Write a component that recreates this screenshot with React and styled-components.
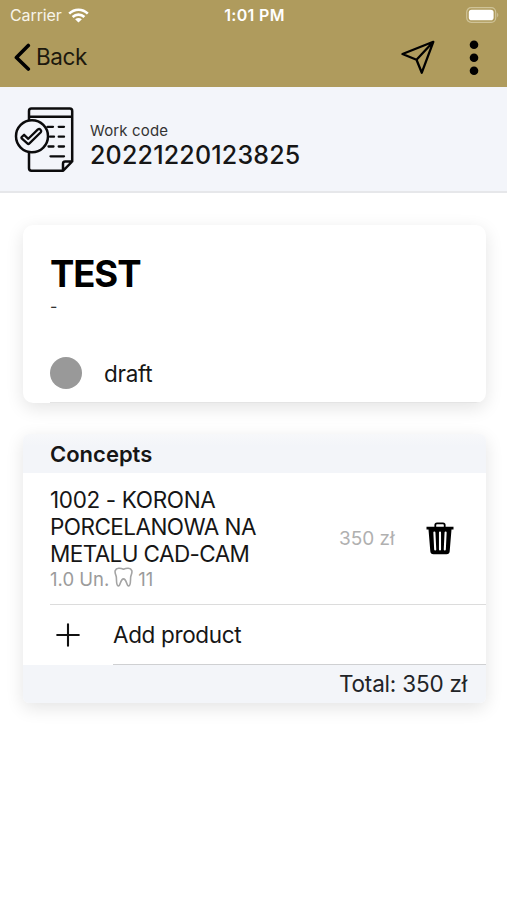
import React from "react";
import styled, { createGlobalStyle } from "styled-components";

const GlobalStyle = createGlobalStyle`
  * { box-sizing: border-box; }
  body {
    margin: 0;
    background: #fff;
    color: #161616;
    font-family: Inter, "Liberation Sans", sans-serif;
  }
  svg { display: block; flex: none; }
`;

const Screen = styled.div`
  width: 507px;
  height: 900px;
  overflow: hidden;
  background: #fff;
`;

const Header = styled.header`
  height: 87px;
  background: #af9b5d;
`;

const StatusBar = styled.div`
  display: grid;
  grid-template-columns: 1fr auto 1fr;
  align-items: center;
  height: 30px;
  padding: 0 8px 0 10px;
  color: #fff;
`;

const StatusGroup = styled.div`
  display: flex;
  align-items: center;
  justify-content: ${(p) => (p.$end ? "flex-end" : "flex-start")};
  gap: 6px;
`;

const Label = styled.span`
  display: block;
  white-space: nowrap;
  font-size: ${(p) => p.$size}px;
  line-height: ${(p) => p.$line || 27}px;
  font-weight: ${(p) => p.$weight || 400};
  letter-spacing: ${(p) => p.$track || 0}px;
  color: ${(p) => p.$color || "inherit"};
`;

const Toolbar = styled.nav`
  display: flex;
  align-items: center;
  justify-content: space-between;
  height: 54px;
  padding: 0 27px 0 13px;
`;

const BackButton = styled.button`
  display: flex;
  align-items: center;
  gap: 5px;
  padding: 0 0 1px;
  border: 0;
  background: none;
  color: #1d190e;
  font: inherit;
`;

const Actions = styled.div`
  display: flex;
  align-items: center;
  gap: 33px;
`;

const WorkBanner = styled.section`
  display: flex;
  height: 106px;
  padding: 19px 14px 0;
  gap: 14px;
  background: #f3f5fa;
  border-bottom: 2px solid #e6e7ea;
`;

const WorkText = styled.div`
  padding-top: 15px;
`;

const Card = styled.section`
  width: 463px;
  margin: ${(p) => p.$top}px 0 0 23px;
  border-radius: ${(p) => p.$radius}px;
  overflow: hidden;
  background: #fff;
  box-shadow: 0 5px 18px rgba(0, 0, 0, 0.11);
`;

const Summary = styled.div`
  height: 178px;
  padding: 28px 0 0 27px;
`;

const Status = styled.div`
  display: flex;
  align-items: center;
  gap: 22px;
  height: 32px;
  margin-top: 39px;
`;

const SummaryBody = styled.div`
  height: 150px;
  border-bottom: 1px solid #e4e4e4;
`;

const StatusDot = styled.span`
  width: 32px;
  height: 32px;
  border-radius: 50%;
  background: #999;
`;

const CardHeading = styled.div`
  display: flex;
  align-items: center;
  height: 39px;
  padding: 1px 27px 0;
  background: linear-gradient(#f7f8fa, #f3f5f9 12px);
`;

const ProductRow = styled.div`
  display: flex;
  height: 132px;
  margin-left: 27px;
  padding: 13px 31px 0 0;
  border-bottom: 1px solid #dcdcdc;
`;

const ProductInfo = styled.div`
  width: 289px;
`;

const Detail = styled.div`
  display: flex;
  align-items: flex-start;
  gap: 5px;
  height: 24px;
  color: #9b9b9b;
`;

const PriceArea = styled.div`
  display: flex;
  align-items: center;
  justify-content: space-between;
  width: 115px;
  height: 105px;
`;

const AddRow = styled.button`
  display: flex;
  align-items: center;
  width: 100%;
  height: 60px;
  padding: 0 0 0 33px;
  border: 0;
  background: #fff;
  color: #161616;
  font: inherit;
`;

const AddLabel = styled.div`
  display: flex;
  align-items: center;
  flex: 1;
  height: 60px;
  margin-left: 33px;
  border-bottom: 1px solid #cfd0d2;
`;

const TotalRow = styled.div`
  display: flex;
  align-items: center;
  justify-content: flex-end;
  height: 38px;
  padding: 0 19px 1px 0;
  background: #f3f5f9;
`;

const WifiIcon = () => (
  <svg width="21" height="15" viewBox="0 0 21 15" fill="none" stroke="#fff" strokeWidth="2.6">
    <path d="M1.2 5.6C6.4.4 14.6.4 19.8 5.6" />
    <path d="M4.6 9C8 5.8 13 5.8 16.4 9" />
    <path d="M10.5 14.6 7.1 11.3Q10.5 8.5 13.9 11.3Z" fill="#fff" stroke="none" />
  </svg>
);

const BatteryIcon = () => (
  <svg width="33" height="16" viewBox="0 0 33 16">
    <rect x=".7" y=".7" width="29" height="14.6" rx="4.5" fill="none" stroke="#cfc398" strokeWidth="1.2" />
    <rect x="2.8" y="2.8" width="24.8" height="10.4" rx="2.8" fill="#fff" />
    <path d="M31.2 5.6Q33.4 8 31.2 10.4Z" fill="#cfc398" />
  </svg>
);

const BackIcon = () => (
  <svg width="18" height="28" viewBox="0 0 18 28" fill="none" stroke="#000" strokeWidth="3.6" strokeLinecap="round" strokeLinejoin="round">
    <path d="M15.3 2.5 3.4 14.5l11.9 11.5" />
  </svg>
);

const SendIcon = () => (
  <svg width="34" height="34" viewBox="0 0 34 34" fill="none" stroke="#000" strokeWidth="2.3" strokeLinejoin="round">
    <path d="M32.3 1.8 1.5 14l14 5.7 5.3 13ZM32.3 1.8 15.5 19.7" />
  </svg>
);

const MoreIcon = () => (
  <svg width="12" height="36" viewBox="0 0 12 36">
    <circle cx="6" cy="5.8" r="4.3" />
    <circle cx="6" cy="18.8" r="4.3" />
    <circle cx="6" cy="31.7" r="4.3" />
  </svg>
);

const WorkIcon = () => (
  <svg width="62" height="68" viewBox="14 106 62 68" fill="none" stroke="#0b0b0c" strokeWidth="2.5" strokeLinejoin="round" strokeLinecap="round">
    <path d="M29 120v-9q0-2.4 2.4-2.4h38.4q2.4 0 2.4 2.4v50.5l-9 9.2H31.4q-2.4 0-2.4-2.4V152M29 116.7h43M63 170.5v-6.8q0-2.2 2.2-2.2H72" />
    <circle cx="32" cy="136.2" r="16" />
    <path d="m21.7 137 2.4-2.2 4.2 4 9.6-9.4q1.4-1 2.7.3 1.2 1.3.2 2.6L29.2 143.6q-.8.8-1.6 0l-5.9-5.2q-.6-.7 0-1.4Z" strokeWidth="2.3" />
    <path d="M47.5 126.8H53M58.7 126.8H64M50 136.7h4M58.7 136.7H64M48.5 146.5h5M58.7 146.5H64M50.5 156.3H64" strokeWidth="2.3" />
  </svg>
);

const ToothIcon = () => (
  <svg width="19" height="21" viewBox="0 0 19 21" fill="none" stroke="#a4a4a4" strokeWidth="1.6" strokeLinejoin="round" strokeLinecap="round">
    <path d="M9.5 2.3C6.6.9 2.4.5 1.2 3.6c-.7 2.3.8 4.2 1.1 6.3.4 3-.3 8.5 1.9 9.1 2.5.5 1.8-7.1 5.3-7.1s2.8 7.6 5.3 7.1c2.2-.6 1.5-6.1 1.9-9.1.3-2.1 1.8-4 1.1-6.3C16.6.5 12.4.9 9.5 2.3Z" />
  </svg>
);

const TrashIcon = () => (
  <svg width="28" height="34" viewBox="0 0 28 34">
    <path d="M9.3 5V3Q9.3 1.4 11 1.4h6q1.7 0 1.7 1.6v2" fill="none" stroke="#000" strokeWidth="1.8" />
    <path d="M.5 4.8h27v2.6h-2l-1.8 21.8q-.2 3-3.2 3h-13q-3 0-3.2-3L2.5 7.4h-2Z" />
    <path d="m8.4 10.5.8 17M14 10.5v17M19.6 10.5l-.8 17" fill="none" stroke="#fff" strokeWidth="2.1" strokeLinecap="round" />
  </svg>
);

const PlusIcon = () => (
  <svg width="24" height="24" viewBox="0 0 24 24" fill="none" stroke="#111" strokeWidth="2.1" strokeLinecap="round">
    <path d="M12 1.2v21.6M1.2 12h21.6" />
  </svg>
);

const nameLines = [
  { text: "1002 - KORONA", track: -0.35 },
  { text: "PORCELANOWA NA", track: -0.55 },
  { text: "METALU CAD-CAM", track: -0.6 },
];

export default function App() {
  return (
    <>
      <GlobalStyle />
      <Screen>
        <Header>
          <StatusBar>
            <StatusGroup>
              <Label $size={16} $track={-0.1} $color="#f7f4e9">Carrier</Label>
              <WifiIcon />
            </StatusGroup>
            <Label $size={16} $weight={600} $track={0.3}>1:01 PM</Label>
            <StatusGroup $end>
              <BatteryIcon />
            </StatusGroup>
          </StatusBar>
          <Toolbar>
            <BackButton>
              <BackIcon />
              <Label $size={22.5} $track={-0.4}>Back</Label>
            </BackButton>
            <Actions>
              <SendIcon />
              <MoreIcon />
            </Actions>
          </Toolbar>
        </Header>
        <WorkBanner>
          <WorkIcon />
          <WorkText>
            <Label $size={15} $line={19} $track={0.15} $color="#333">Work code</Label>
            <Label $size={25} $line={30} $weight={500} $track={0.2}>20221220123825</Label>
          </WorkText>
        </WorkBanner>
        <Card $top={32} $radius={10}>
          <Summary>
            <SummaryBody>
              <Label $size={36.5} $line={42} $weight={700} $track={-1.1} $color="#000">TEST</Label>
              <Label $size={16} $line={23} $color="#333">-</Label>
              <Status>
                <StatusDot />
                <Label $size={22.5} $track={-0.3}>draft</Label>
              </Status>
            </SummaryBody>
          </Summary>
        </Card>
        <Card $top={31} $radius={6}>
          <CardHeading>
            <Label $size={22} $weight={600}>Concepts</Label>
          </CardHeading>
          <ProductRow>
            <ProductInfo>
              {nameLines.map((line) => (
                <Label key={line.text} $size={22.5} $track={line.track}>{line.text}</Label>
              ))}
              <Detail>
                <Label $size={18.5} $line={25}>1.0 Un.</Label>
                <ToothIcon />
                <Label $size={18.5} $line={25}>11</Label>
              </Detail>
            </ProductInfo>
            <PriceArea>
              <Label $size={19} $line={29} $color="#b0b0b0">350 zł</Label>
              <TrashIcon />
            </PriceArea>
          </ProductRow>
          <AddRow>
            <PlusIcon />
            <AddLabel>
              <Label $size={22.5} $track={-0.35}>Add product</Label>
            </AddLabel>
          </AddRow>
          <TotalRow>
            <Label $size={22.5} $track={-0.2} $color="#222427">Total: 350 zł</Label>
          </TotalRow>
        </Card>
      </Screen>
    </>
  );
}
